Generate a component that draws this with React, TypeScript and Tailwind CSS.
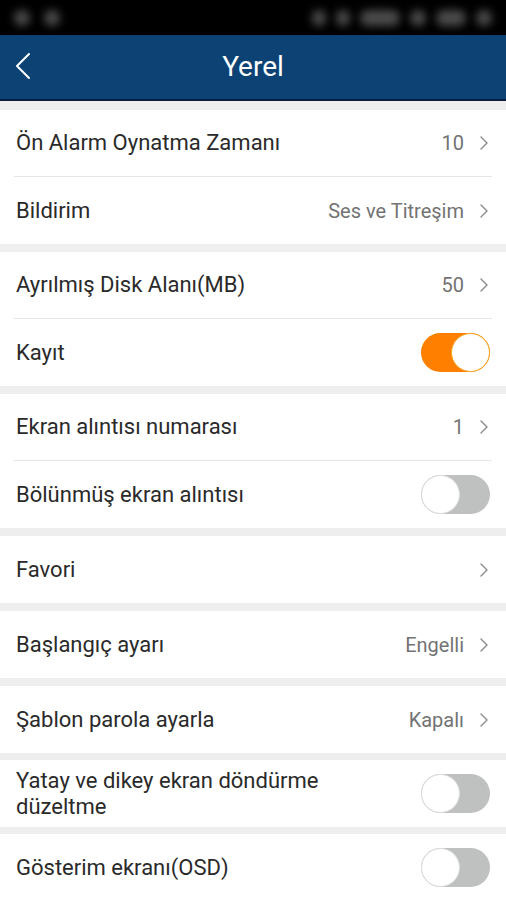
import React from "react";

const Chevron = () => (
  <svg width="12" height="16" viewBox="0 0 12 16" className="ml-[14px] shrink-0">
    <path d="M3 2 L9 8 L3 14" fill="none" stroke="#8a8a8a" strokeWidth="1.4" strokeLinecap="round" strokeLinejoin="round" />
  </svg>
);

const Toggle = ({ on }: { on: boolean }) =>
  on ? (
    <div className="w-[69px] h-[39px] rounded-full bg-[#ff7f00] flex items-center justify-end shrink-0">
      <div className="w-[39px] h-[39px] rounded-full bg-white border-[1.5px] border-[#f5a623]" />
    </div>
  ) : (
    <div className="w-[69px] h-[39px] rounded-full bg-[#bfc1c0] flex items-center justify-start shrink-0">
      <div className="w-[39px] h-[39px] rounded-full bg-white border border-[#dcdcdc]" />
    </div>
  );

type Row = { label: React.ReactNode; value?: string; chevron?: boolean; toggle?: boolean; on?: boolean };

const RowView = ({ r, divider }: { r: Row; divider?: boolean }) => (
  <div className="bg-white px-[14px]">
    <div className={`h-[67px] flex items-center px-[2px] ${divider ? "border-b border-[#e6e6e6]" : ""}`}>
      <div className="flex-1 text-[22px] leading-[26px] text-[#2a2a2a]">{r.label}</div>
      {r.value && <span className="text-[20px] text-[#737373]">{r.value}</span>}
      {r.chevron && <Chevron />}
      {r.toggle && <Toggle on={!!r.on} />}
    </div>
  </div>
);

const Section = ({ rows, gap }: { rows: Row[]; gap: number }) => (
  <div style={{ marginBottom: gap }}>
    {rows.map((r, i) => (
      <RowView key={i} r={r} divider={i < rows.length - 1} />
    ))}
  </div>
);

const Blob = ({ w }: { w: string }) => <div className={`${w} h-[16px] rounded-full bg-[#4a4a4a] blur-[4px]`} />;

export default function App() {
  return (
    <div className="w-[506px] h-[900px] overflow-hidden bg-[#eeeeee]" style={{ fontFamily: "Roboto, 'Noto Sans', sans-serif" }}>
      <div className="h-[35px] bg-black flex items-center justify-between px-[14px]">
        <div className="flex gap-[14px]">
          <Blob w="w-[16px]" />
          <Blob w="w-[16px]" />
        </div>
        <div className="flex gap-[10px] items-center">
          <Blob w="w-[14px]" />
          <Blob w="w-[14px]" />
          <Blob w="w-[40px]" />
          <Blob w="w-[16px]" />
          <Blob w="w-[30px]" />
          <Blob w="w-[16px]" />
        </div>
      </div>
      <div className="h-[66px] bg-[#0c4274] grid grid-cols-[60px_1fr_60px] items-center border-b-[2px] border-[#061f3f]">
        <div className="pl-[14px] flex items-center">
          <svg width="20" height="32" viewBox="0 0 20 32">
            <path d="M15 3 L3 15 L15 27" fill="none" stroke="#fff" strokeWidth="2" strokeLinecap="round" strokeLinejoin="round" />
          </svg>
        </div>
        <div className="text-center text-white text-[28px]">Yerel</div>
        <div />
      </div>
      <div className="h-[9px]" />
      <Section
        gap={8}
        rows={[
          { label: "Ön Alarm Oynatma Zamanı", value: "10", chevron: true },
          { label: "Bildirim", value: "Ses ve Titreşim", chevron: true },
        ]}
      />
      <Section
        gap={8}
        rows={[
          { label: "Ayrılmış Disk Alanı(MB)", value: "50", chevron: true },
          { label: "Kayıt", toggle: true, on: true },
        ]}
      />
      <Section
        gap={8}
        rows={[
          { label: "Ekran alıntısı numarası", value: "1", chevron: true },
          { label: "Bölünmüş ekran alıntısı", toggle: true },
        ]}
      />
      <Section gap={8} rows={[{ label: "Favori", chevron: true }]} />
      <Section gap={8} rows={[{ label: "Başlangıç ayarı", value: "Engelli", chevron: true }]} />
      <Section gap={7} rows={[{ label: "Şablon parola ayarla", value: "Kapalı", chevron: true }]} />
      <Section
        gap={7}
        rows={[
          {
            label: (
              <>
                Yatay ve dikey ekran döndürme
                <br />
                düzeltme
              </>
            ),
            toggle: true,
          },
        ]}
      />
      <Section gap={0} rows={[{ label: "Gösterim ekranı(OSD)", toggle: true }]} />
    </div>
  );
}
